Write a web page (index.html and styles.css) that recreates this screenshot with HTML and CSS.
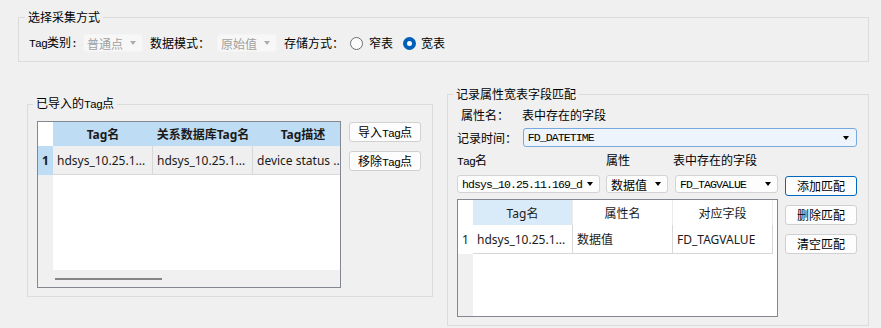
FILE: index.html
```html
<!DOCTYPE html>
<html lang="zh-CN">
<head>
    <meta charset="UTF-8">
    <meta name="viewport" content="width=device-width, initial-scale=1.0">
    <title>宽表字段匹配</title>
    <link rel="stylesheet" href="styles.css">
</head>
<body>
<div class="page">
    <fieldset class="group mode-group">
        <legend>选择采集方式</legend>
        <div class="mode-row">
            <span class="lbl lbl-type"><span class="mono">Tag</span>类别<span class="mono">:</span></span>
            <div class="combo combo-off"><span>普通点</span><i class="arrow"></i></div>
            <span class="lbl lbl-mode">数据模式：</span>
            <div class="combo combo-off"><span>原始值</span><i class="arrow"></i></div>
            <span class="lbl lbl-store">存储方式：</span>
            <span class="radio"><i class="dot"></i>窄表</span>
            <span class="radio checked"><i class="dot"></i>宽表</span>
        </div>
    </fieldset>

    <div class="lower">
        <fieldset class="group imported-group">
            <legend>已导入的<span class="mono">Tag</span>点</legend>
            <div class="imported-body">
                <div class="grid grid-tags">
                    <div class="grid-head">
                        <div class="corner"></div>
                        <div class="hcell">Tag名</div>
                        <div class="hcell">关系数据库Tag名</div>
                        <div class="hcell">Tag描述</div>
                    </div>
                    <div class="grid-row selected">
                        <div class="rnum">1</div>
                        <div class="cell">hdsys_10.25.1...</div>
                        <div class="cell">hdsys_10.25.1...</div>
                        <div class="cell">device status ..</div>
                    </div>
                    <div class="grid-fill"><div class="rnum-fill"></div></div>
                    <div class="hscroll"><div class="thumb"></div></div>
                </div>
                <div class="btn-col">
                    <button class="btn">导入<span class="mono">Tag</span>点</button>
                    <button class="btn">移除<span class="mono">Tag</span>点</button>
                </div>
            </div>
        </fieldset>

        <fieldset class="group match-group">
            <legend>记录属性宽表字段匹配</legend>
            <div class="attr-row">
                <span class="lbl-attr">属性名：</span>
                <span>表中存在的字段</span>
            </div>
            <div class="time-row">
                <span class="lbl lbl-time">记录时间：</span>
                <div class="combo combo-time"><span class="mono">FD_DATETIME</span><i class="arrow"></i></div>
            </div>
            <div class="field-labels">
                <span class="fl-tag"><span class="mono">Tag</span>名</span>
                <span class="fl-prop">属性</span>
                <span>表中存在的字段</span>
            </div>
            <div class="match-body">
                <div class="match-left">
                    <div class="combo-row">
                        <div class="combo combo-on w-tag"><span class="mono">hdsys_10.25.11.169_d</span><i class="arrow"></i></div>
                        <div class="combo combo-on w-prop"><span>数据值</span><i class="arrow"></i></div>
                        <div class="combo combo-on w-field"><span class="mono">FD_TAGVALUE</span><i class="arrow"></i></div>
                    </div>
                    <div class="grid grid-match">
                        <div class="grid-head">
                            <div class="corner"></div>
                            <div class="hcell current">Tag名</div>
                            <div class="hcell">属性名</div>
                            <div class="hcell">对应字段</div>
                        </div>
                        <div class="grid-row">
                            <div class="rnum">1</div>
                            <div class="cell">hdsys_10.25.1...</div>
                            <div class="cell">数据值</div>
                            <div class="cell">FD_TAGVALUE</div>
                        </div>
                        <div class="grid-fill"><div class="rnum-fill"></div></div>
                    </div>
                </div>
                <div class="btn-col">
                    <button class="btn btn-default">添加匹配</button>
                    <button class="btn">删除匹配</button>
                    <button class="btn">清空匹配</button>
                </div>
            </div>
        </fieldset>
    </div>
</div>
</body>
</html>
```

FILE: styles.css
```css
body {
    margin: 0;
    background: #f0f0f0;
    font-family: "Noto Sans CJK SC", sans-serif;
    font-size: 12px;
    color: #000;
}
.page {
    padding: 10px 0 0 18px;
}
.mono {
    font-family: "Liberation Mono", monospace;
    font-size: 11.5px;
    letter-spacing: -0.9px;
}

/* group boxes */
.group {
    margin: 0;
    border: 1px solid #dcdcdc;
    box-sizing: border-box;
    min-width: 0;
}
.group legend {
    padding: 0 3px;
    margin-left: -4px;
    line-height: 14px;
}
.mode-group {
    width: 851px;
    padding: 10px 9px 9px 10px;
}
.mode-row {
    display: flex;
    align-items: center;
    height: 18px;
}
.lbl {
    line-height: 14px;
    white-space: nowrap;
}
.lbl-type { width: 54px; }
.lbl-mode { width: 67px; margin-left: 7px; }
.lbl-store { width: 66px; margin-left: 7px; }

/* combo boxes */
.combo {
    display: flex;
    align-items: center;
    justify-content: space-between;
    box-sizing: border-box;
    height: 18px;
    padding: 0 6px 0 3px;
    border-radius: 3px;
    white-space: nowrap;
}
.combo-off {
    width: 60px;
    background: #f7f7f7;
    border: 1px solid #f4f4f4;
    color: #a0a0a0;
}
.arrow {
    width: 0;
    height: 0;
    border-left: 3.5px solid transparent;
    border-right: 3.5px solid transparent;
    border-top: 4px solid #000;
}
.combo-off .arrow {
    border-top-color: #ababab;
}
.combo-on {
    background: #fdfdfd;
    border: 1px solid #d3d3d3;
    padding: 0 6px 0 4px;
}
.combo-time {
    width: 336px;
    height: 19px;
    background: #eef4fb;
    border: 1px solid #78a9dc;
    padding: 0 7px 0 4px;
}
.w-tag { width: 143px; }
.w-prop { width: 62px; margin-left: 6px; }
.w-field { width: 103px; margin-left: 7px; }

/* radios */
.radio {
    display: flex;
    align-items: center;
    line-height: 14px;
}
.radio .dot {
    width: 13px;
    height: 13px;
    box-sizing: border-box;
    border-radius: 50%;
    border: 1px solid #6d6d6d;
    background: #fcfcfc;
    margin-right: 6px;
}
.radio.checked {
    margin-left: 10px;
}
.radio.checked .dot {
    border: 4px solid #005fb8;
    background: #fff;
    margin-right: 5px;
}

/* lower part */
.lower {
    display: flex;
    align-items: flex-start;
    padding-left: 9px;
}
.imported-group {
    width: 406px;
    margin-top: 34px;
    padding: 9px 8px 8px 9px;
}
.imported-body {
    display: flex;
    gap: 8px;
}
.btn-col {
    padding-top: 1px;
}
.btn {
    display: block;
    box-sizing: border-box;
    width: 72px;
    height: 20px;
    padding: 0;
    background: #fdfdfd;
    border: 1px solid #d0d0d0;
    border-radius: 3px;
    font-family: "Noto Sans CJK SC", sans-serif;
    font-size: 12px;
    color: #000;
    line-height: 18px;
}
.btn + .btn {
    margin-top: 9px;
}
.btn-default {
    border-color: #0067c0;
}

/* grids */
.grid {
    box-sizing: border-box;
    border: 1px solid #828790;
    background: #fff;
    overflow: hidden;
    display: flex;
    flex-direction: column;
    font-family: "Noto Sans", "Noto Sans CJK SC", sans-serif;
    font-size: 12px;
    color: #1a1a1a;
}
.grid-tags {
    width: 304px;
    height: 167px;
}
.grid-head,
.grid-row {
    display: flex;
    flex-shrink: 0;
}
.grid-head {
    height: 24px;
}
.grid-tags .grid-head {
    background: #bedcf4;
}
.corner {
    width: 15px;
    flex-shrink: 0;
    background: #fff;
}
.hcell {
    width: 100px;
    flex-shrink: 0;
    display: flex;
    align-items: center;
    justify-content: center;
    white-space: nowrap;
}
.grid-tags .hcell {
    font-weight: bold;
}
.grid-row {
    height: 29px;
}
.rnum {
    width: 15px;
    flex-shrink: 0;
    display: flex;
    align-items: center;
    justify-content: center;
}
.cell {
    width: 100px;
    flex-shrink: 0;
    box-sizing: border-box;
    padding-left: 4px;
    border-right: 1px solid #d8d8d8;
    border-bottom: 1px solid #d8d8d8;
    display: flex;
    align-items: center;
    white-space: nowrap;
    overflow: hidden;
}
.selected .rnum {
    background: #bedcf4;
    font-weight: bold;
}
.selected .cell {
    background: #efefef;
}
.grid-fill {
    flex: 1;
    display: flex;
}
.rnum-fill {
    width: 15px;
    background: #f0f0f0;
}
.hscroll {
    height: 17px;
    flex-shrink: 0;
    background: #f0f0f0;
}
.thumb {
    margin: 8px 0 0 17px;
    width: 107px;
    height: 2px;
    background: #858585;
}

/* match group */
.match-group {
    width: 422px;
    margin: 25px 0 0 14px;
    padding: 7px 11px 8px 9px;
}
.attr-row {
    display: flex;
    line-height: 14px;
    padding-left: 4px;
}
.lbl-attr { width: 61px; }
.time-row {
    display: flex;
    align-items: center;
    margin-top: 6px;
}
.lbl-time { width: 66px; }
.field-labels {
    display: flex;
    margin-top: 6px;
    line-height: 14px;
}
.fl-tag { width: 149px; }
.fl-prop { width: 67px; }
.match-body {
    display: flex;
    gap: 7px;
    margin-top: 6px;
}
.combo-row {
    display: flex;
}
.grid-match {
    width: 321px;
    height: 118px;
    margin-top: 6px;
}
.grid-match .grid-head {
    height: 25px;
}
.grid-match .hcell {
    border-right: 1px solid #ececec;
    box-sizing: border-box;
}
.grid-match .hcell.current {
    background: #d9eaf8;
}
```
